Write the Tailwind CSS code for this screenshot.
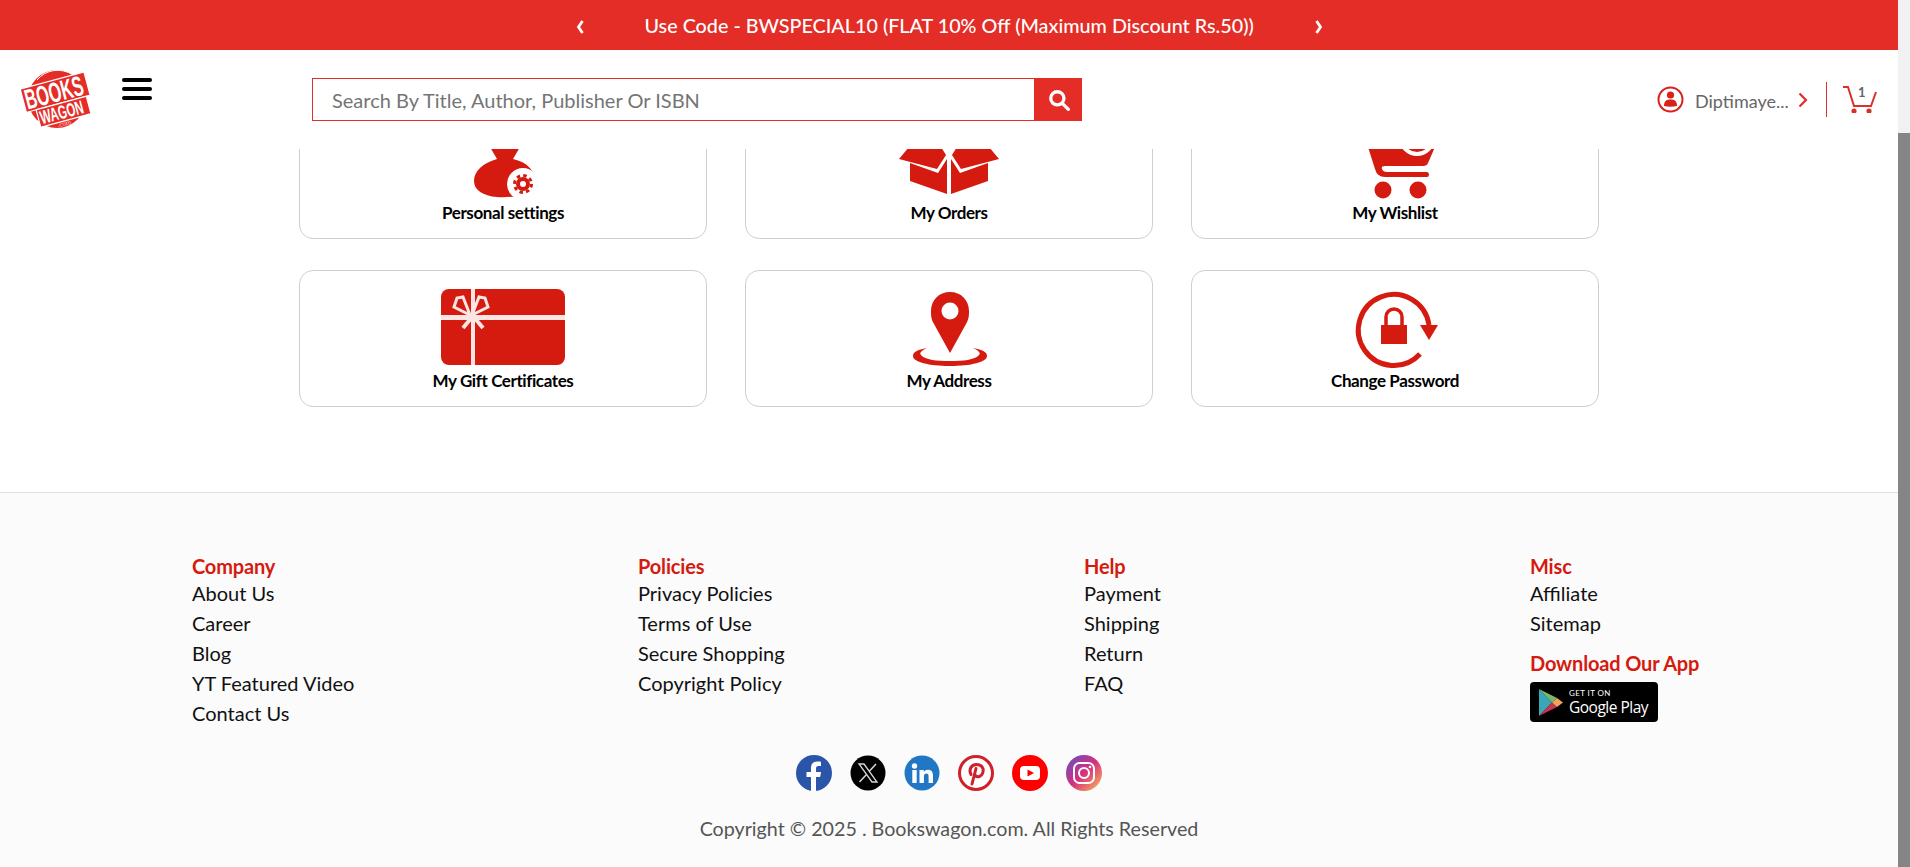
<!DOCTYPE html>
<html lang="en">
<head>
    <meta charset="UTF-8" />
    <title>Bookswagon - My Account</title>
    <script src="https://cdn.jsdelivr.net/npm/@tailwindcss/browser@4"></script>
</head>
<body class="h-[867px] overflow-hidden bg-white font-['Lato',sans-serif] text-black">
<div class="flex h-[867px]">
    <div class="w-[1898px] flex flex-col">

        <!-- Offer banner -->
        <div class="h-[50px] shrink-0 bg-[#e52d27] text-white flex items-center justify-center">
            <svg class="w-[10px] h-[16px] mr-[60px] mt-[4px]" viewBox="0 0 10 16" fill="none" stroke="white" stroke-width="2.800"><path d="M7.500 2 L3.500 8 L7.500 14"/></svg>
            <span class="mt-[2px] text-[19.750px] leading-[48px] font-medium w-[609px] text-center whitespace-nowrap">Use Code - BWSPECIAL10 (FLAT 10% Off (Maximum Discount Rs.50))</span>
            <svg class="w-[10px] h-[16px] ml-[60px] mt-[4px]" viewBox="0 0 10 16" fill="none" stroke="white" stroke-width="2.800"><path d="M2.500 2 L6.500 8 L2.500 14"/></svg>
        </div>

        <!-- Header -->
        <header class="h-[99px] shrink-0 bg-white flex items-start pl-[21px]">
            <svg class="w-[72px] h-[62px] mt-[19px]" viewBox="0 0 72 62">
                <circle cx="36" cy="30" r="29" fill="#e52d27"/>
                <path d="M16 11 A27 27 0 0 1 52 6" fill="none" stroke="white" stroke-width="1"/>
                <g transform="rotate(-15 36 30)">
                    <rect x="3" y="11" width="66" height="24" fill="#e52d27" stroke="white" stroke-width="1.200"/>
                    <rect x="13" y="35" width="52" height="18" fill="#e52d27" stroke="white" stroke-width="1.200"/>
                    <text transform="translate(5 32.600) scale(0.58 1)" font-family="Liberation Sans" font-weight="700" font-size="28" fill="white">BOOKS</text>
                    <text transform="translate(15 50.500) scale(0.6 1)" font-family="Liberation Sans" font-weight="700" font-size="19" fill="white">WAGON</text>
                </g>
                <text x="37" y="58" font-family="Liberation Serif" font-size="7" fill="#ffd0d0" transform="rotate(-12 37 58)">.com</text>
            </svg>
            <button class="w-[30px] mt-[28px] ml-[29px] flex flex-col gap-[5px]">
                <span class="block h-[4px] rounded-full bg-black"></span>
                <span class="block h-[4px] rounded-full bg-black"></span>
                <span class="block h-[4px] rounded-full bg-black"></span>
            </button>
            <form class="w-[770px] h-[43px] mt-[28px] ml-[160px] flex">
                <input class="flex-1 min-w-0 border border-[#e52d27] pl-[19px] text-[20px] outline-none placeholder:text-[#757575]" placeholder="Search By Title, Author, Publisher Or ISBN" />
                <button type="button" class="w-[47px] bg-[#e52d27] flex items-center justify-center">
                    <svg class="w-[22px] h-[22px]" viewBox="0 0 20 20" fill="none" stroke="white"><circle cx="8.500" cy="8.500" r="6" stroke-width="3"/><path d="M13 13 L18.500 18.500" stroke-width="3" stroke-linecap="round"/></svg>
                </button>
            </form>
            <div class="ml-auto flex items-center h-[35px] mt-[32px] pr-[21px]">
                <svg class="w-[27px] h-[27px]" viewBox="0 0 27 27">
                    <circle cx="13.500" cy="13.500" r="12" fill="none" stroke="#d9201a" stroke-width="2"/>
                    <circle cx="13.500" cy="9" r="3.600" fill="#d9201a"/>
                    <path d="M7 20 C7 14.500 10 13.500 13.500 13.500 C17 13.500 20 14.500 20 20 Q13.500 21.500 7 20 Z" fill="#d9201a"/>
                </svg>
                <span class="ml-[11px] mt-[3px] w-[93px] text-[18px] text-[#666] whitespace-nowrap">Diptimaye...</span>
                <svg class="w-[10px] h-[16px] ml-[10px]" viewBox="0 0 10 16" fill="none" stroke="#e52d27" stroke-width="2.200"><path d="M1.500 1.500 L8 8 L1.500 14.500"/></svg>
                <span class="block w-[1px] h-[35px] bg-[#e52d27] ml-[18px]"></span>
                <div class="relative ml-[16px] w-[34px] h-[27px]">
                    <svg class="w-[34px] h-[27px]" viewBox="0 0 34 27" fill="none" stroke="#d9302a" stroke-width="2">
                        <path d="M0 1 H5 L11 20 H28 L33 6"/>
                        <circle cx="11" cy="25" r="1.600" fill="#d9302a"/>
                        <circle cx="26" cy="25" r="1.600" fill="#d9302a"/>
                    </svg>
                    <span class="absolute left-[15px] top-[-3px] text-[13px] font-bold text-[#666]">1</span>
                </div>
            </div>
        </header>

        <!-- Account tiles, the first row is scrolled under the header -->
        <main class="h-[343px] shrink-0 overflow-hidden flex flex-col justify-end pb-[85px] pl-[299px]">
            <div class="grid grid-cols-[408px_408px_408px] gap-x-[38px] gap-y-[31px] shrink-0">
                <a class="h-[137px] border border-[#cfcfcf] rounded-[14px] flex flex-col items-center pt-[16px]">
                    <svg class="w-[128px] h-[80px]" viewBox="0 0 128 80" fill="#d51a10">
                        <path d="M51 28 H81 L74 40 C88 43 97 52 98 66 C90 77 70 79 58 78 C44 77 35 71 35 62 C35 52 44 44 58 40 Z"/>
                        <circle cx="84" cy="65" r="16" fill="white"/>
                        <circle cx="84" cy="65" r="5" fill="none" stroke="#d51a10" stroke-width="4"/>
                        <circle cx="84" cy="65" r="8.500" fill="none" stroke="#d51a10" stroke-width="3" stroke-dasharray="3.500 3.170"/>
                    </svg>
                    <span class="mt-[3px] text-[17px] leading-[22px] font-bold tracking-[-0.4px]">Personal settings</span>
                </a>
                <a class="h-[137px] border border-[#cfcfcf] rounded-[14px] flex flex-col items-center pt-[16px]">
                    <svg class="w-[128px] h-[80px]" viewBox="0 0 128 80" fill="#d51a10">
                        <path d="M25 44 L53 54 L62 40 V75 L25 62 Z"/>
                        <path d="M103 44 L75 54 L66 40 V75 L103 62 Z"/>
                        <path d="M14 40 L24 28 H56 L61 36 L52 50 Z"/>
                        <path d="M114 40 L104 28 H72 L67 36 L76 50 Z"/>
                    </svg>
                    <span class="mt-[3px] text-[17px] leading-[22px] font-bold tracking-[-0.4px]">My Orders</span>
                </a>
                <a class="h-[137px] border border-[#cfcfcf] rounded-[14px] flex flex-col items-center pt-[16px]">
                    <svg class="w-[128px] h-[80px]" viewBox="0 0 128 80" fill="#d51a10">
                        <path d="M37 28 H104 L97 44 Q96 47 92 47 H54 Q50 47 51 50 Q52 53 56 53 H96 Q98 53 98 55.500 Q98 58 96 58 H54 Q46 58 44 50 Z"/>
                        <circle cx="86" cy="19" r="18" fill="white"/>
                        <circle cx="86" cy="19" r="14" fill="#d51a10"/>
                        <circle cx="52" cy="71" r="8.500"/>
                        <circle cx="87" cy="71" r="8.500"/>
                    </svg>
                    <span class="mt-[3px] text-[17px] leading-[22px] font-bold tracking-[-0.4px]">My Wishlist</span>
                </a>
                <a class="h-[137px] border border-[#cfcfcf] rounded-[14px] flex flex-col items-center pt-[16px]">
                    <svg class="w-[128px] h-[80px]" viewBox="0 0 128 80">
                        <rect x="2" y="2" width="124" height="76" rx="8" fill="#d51a10"/>
                        <path d="M32 2 H36 V78 H32 Z M2 28 H126 V33 H2 Z" fill="#fbe6e4"/>
                        <path d="M31 28 L15 20 L18 11 L24 10 Z M33 28 L49 20 L46 11 L40 10 Z" fill="#d51a10" stroke="#fbe6e4" stroke-width="3"/>
                        <path d="M34 29 L24 41 M34 29 L44 41" stroke="#fbe6e4" stroke-width="4"/>
                    </svg>
                    <span class="mt-[3px] text-[17px] leading-[22px] font-bold tracking-[-0.4px]">My Gift Certificates</span>
                </a>
                <a class="h-[137px] border border-[#cfcfcf] rounded-[14px] flex flex-col items-center pt-[16px]">
                    <svg class="w-[128px] h-[80px]" viewBox="0 0 128 80">
                        <path d="M42 61 C32 63 28 65 28 69 C28 75 44 79 65 79 C86 79 102 75 102 69 C102 65 98 63 88 61 C94 64 96 66 94 68 C90 73 78 74 65 74 C52 74 40 73 36 68 C34 66 36 64 42 61 Z" fill="#d51a10"/>
                        <path d="M65 66 L49 37 C46 32 46 28 46 24 C46 13 54 5 65 5 C76 5 84 13 84 24 C84 28 84 32 81 37 Z" fill="#d51a10"/>
                        <circle cx="65" cy="24" r="8.500" fill="white"/>
                    </svg>
                    <span class="mt-[3px] text-[17px] leading-[22px] font-bold tracking-[-0.4px]">My Address</span>
                </a>
                <a class="h-[137px] border border-[#cfcfcf] rounded-[14px] flex flex-col items-center pt-[16px]">
                    <svg class="w-[128px] h-[80px] overflow-visible" viewBox="0 0 128 80" fill="#d51a10">
                        <path d="M89 67 A35.500 35.500 0 1 1 98 38" fill="none" stroke="#d51a10" stroke-width="5"/>
                        <path d="M89 38 H107 L98 53 Z"/>
                        <rect x="50" y="38" width="26" height="19"/>
                        <path d="M55 38 V30 A8 8 0 0 1 71 30 V38" fill="none" stroke="#d51a10" stroke-width="3.500"/>
                    </svg>
                    <span class="mt-[3px] text-[17px] leading-[22px] font-bold tracking-[-0.4px]">Change Password</span>
                </a>
            </div>
        </main>

        <!-- Footer -->
        <footer class="flex-1 border-t border-[#e2e2e2] bg-[#fbfbfb] pt-[61px]">
            <div class="grid grid-cols-[446px_446px_446px_300px] pl-[192px] text-[20px] leading-[30px] text-[#111]">
                <div class="flex flex-col">
                    <h4 class="text-[20px] leading-[24px] font-bold tracking-[-0.15px] text-[#d51a10]">Company</h4>
                    <a>About Us</a>
                    <a>Career</a>
                    <a>Blog</a>
                    <a>YT Featured Video</a>
                    <a>Contact Us</a>
                </div>
                <div class="flex flex-col">
                    <h4 class="text-[20px] leading-[24px] font-bold tracking-[-0.15px] text-[#d51a10]">Policies</h4>
                    <a>Privacy Policies</a>
                    <a>Terms of Use</a>
                    <a>Secure Shopping</a>
                    <a>Copyright Policy</a>
                </div>
                <div class="flex flex-col">
                    <h4 class="text-[20px] leading-[24px] font-bold tracking-[-0.15px] text-[#d51a10]">Help</h4>
                    <a>Payment</a>
                    <a>Shipping</a>
                    <a>Return</a>
                    <a>FAQ</a>
                </div>
                <div class="flex flex-col items-start">
                    <h4 class="text-[20px] leading-[24px] font-bold tracking-[-0.15px] text-[#d51a10]">Misc</h4>
                    <a>Affiliate</a>
                    <a>Sitemap</a>
                    <h4 class="mt-[13px] text-[20px] leading-[24px] font-bold tracking-[-0.15px] text-[#d51a10]">Download Our App</h4>
                    <div class="mt-[7px] w-[128px] h-[40px] rounded-[4px] bg-black flex items-center pl-[9px]">
                        <svg class="w-[24px] h-[27px] shrink-0" viewBox="0 0 24 27">
                            <path d="M0 0 L13 13.500 L0 27 Z" fill="#38a8b8"/>
                            <path d="M0 0 L18 9 L13 13.500 Z" fill="#7bb86f"/>
                            <path d="M0 27 L18 18 L13 13.500 Z" fill="#c8354f"/>
                            <path d="M18 9 L24 13.500 L18 18 L13 13.500 Z" fill="#f0a35e"/>
                        </svg>
                        <div class="ml-[6px] flex flex-col text-white">
                            <span class="text-[8px] leading-[10px] tracking-[0.4px]">GET IT ON</span>
                            <span class="text-[15.500px] leading-[19px] font-['Open_Sans',sans-serif] tracking-[-0.5px] whitespace-nowrap">Google Play</span>
                        </div>
                    </div>
                </div>
            </div>

            <!-- Social links -->
            <div class="mt-[27px] flex justify-center gap-[18px]">
                <svg class="w-[36px] h-[36px]" viewBox="0 0 36 36">
                    <circle cx="18" cy="18" r="18" fill="#2a55a8"/>
                    <path d="M15 36 V22 H10.500 V17 H15 V13 C15 8.500 17.500 6.500 21.500 6.500 C23 6.500 24.500 6.700 25 6.800 V11 H22.500 C20.500 11 20 12 20 13.500 V17 H25 L24.200 22 H20 V36 Z" fill="white"/>
                </svg>
                <svg class="w-[36px] h-[36px]" viewBox="0 0 36 36">
                    <circle cx="18" cy="18" r="17.500" fill="black"/>
                    <path d="M9 9 H14 L27 27 H22 Z" fill="none" stroke="#d8d8d8" stroke-width="1.300"/>
                    <path d="M26 9 L19.500 16 M16.500 19.500 L9.500 27" fill="none" stroke="#d8d8d8" stroke-width="1.500"/>
                </svg>
                <svg class="w-[36px] h-[36px]" viewBox="0 0 36 36">
                    <circle cx="18" cy="18" r="17.500" fill="#2277c4"/>
                    <circle cx="10.500" cy="11" r="2.700" fill="white"/>
                    <rect x="8.300" y="15" width="4.400" height="13" fill="white"/>
                    <path d="M15.500 15 H19.800 V17 C20.700 15.500 22.300 14.700 24 14.700 C27.500 14.700 29 17 29 20.500 V28 H24.600 V21.500 C24.600 19.800 24 18.600 22.400 18.600 C20.800 18.600 19.900 19.800 19.900 21.500 V28 H15.500 Z" fill="white"/>
                </svg>
                <svg class="w-[36px] h-[36px]" viewBox="0 0 36 36" fill="none">
                    <circle cx="18" cy="18" r="16.500" fill="white" stroke="#d0202a" stroke-width="3"/>
                    <path d="M13 19.500 C10.500 15 13 9.500 18.500 9.500 C23.500 9.500 26 13 25 17 C24 21.500 19.500 23 17.500 20.500 M18 13.500 L14 29" stroke="#d0202a" stroke-width="3" stroke-linecap="round"/>
                </svg>
                <svg class="w-[36px] h-[36px]" viewBox="0 0 36 36">
                    <circle cx="18" cy="18" r="18" fill="#ff0000"/>
                    <rect x="8" y="11" width="20" height="14" rx="4" fill="white"/>
                    <path d="M15.500 14.500 L22 18 L15.500 21.500 Z" fill="#ff0000"/>
                </svg>
                <svg class="w-[36px] h-[36px]" viewBox="0 0 36 36" fill="none">
                    <defs>
                        <linearGradient id="instaRing" x1="0" y1="0" x2="1" y2="1">
                            <stop offset="0" stop-color="#5b51c8"/>
                            <stop offset="0.500" stop-color="#d62f7f"/>
                            <stop offset="1" stop-color="#fdc350"/>
                        </linearGradient>
                    </defs>
                    <circle cx="18" cy="18" r="18" fill="url(#instaRing)"/>
                    <rect x="8" y="8" width="20" height="20" rx="5.500" stroke="white" stroke-width="2"/>
                    <circle cx="18" cy="18" r="5" stroke="white" stroke-width="2"/>
                    <circle cx="24" cy="12" r="1.300" fill="white"/>
                </svg>
            </div>

            <p class="mt-[25px] text-center text-[19.700px] leading-[26px] text-[#555]">Copyright © 2025 . Bookswagon.com. All Rights Reserved</p>
        </footer>
    </div>

    <!-- Window scrollbar -->
    <div class="w-[12px] bg-[#f1f1f1] pt-[133px]">
        <div class="h-full bg-[#858585]"></div>
    </div>
</div>
</body>
</html>
